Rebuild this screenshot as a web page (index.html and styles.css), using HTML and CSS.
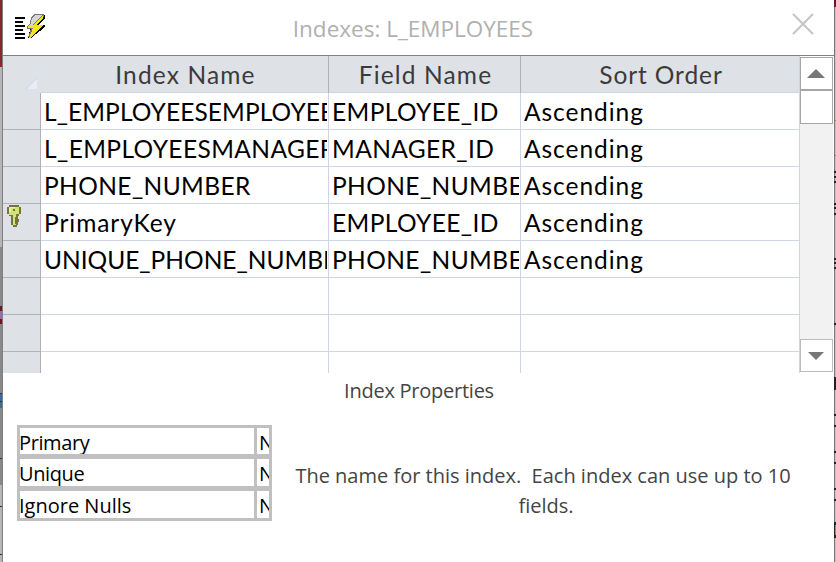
FILE: index.html
```html
<!DOCTYPE html>
<html lang="en">
<head>
<meta charset="utf-8">
<title>Indexes: L_EMPLOYEES</title>
<link rel="stylesheet" href="styles.css">
</head>
<body>
<div class="screen">
<svg class="edge" width="3" height="562" viewBox="0 0 3 562" shape-rendering="crispEdges">
<path fill="#b5b5b5" d="M0 0h2v562h-2z"/><path fill="#8b2631" d="M0 0h2v67h-2z"/><path fill="#888" d="M0 247h2v238h-2z"/>
<path fill="#6e1720" d="M0 306h2v18h-2z"/><path fill="#9270a8" d="M0 311h2v8h-2z"/><path fill="#3d6a9d" d="M0 394h2v14h-2z"/>
<path fill="#333" d="M0 393h2v1h-2zM0 401h2v1h-2zM0 458h2v1h-2zM0 506h2v1h-2zM0 554h2v1h-2z"/><path fill="#808080" d="M2 0h1v562h-1z"/>
</svg>
<main class="window">
<header class="titlebar">
<svg class="app-icon" width="31" height="27" viewBox="0 0 31 27" shape-rendering="crispEdges">
<path fill="#000" d="M0 4h10v2H0zM0 8h8v2H0zM0 12h10v2H0zM0 16h8v2H0zM0 20h10v2H0zM0 24h10v2H0z"/>
<path fill="#000" d="M26 2h4v3l-6 7h6v2L16 25h-3l2-8z"/>
<path fill="#777" d="M19 1h10v2l-7 9h5L14 24h-1l3-8h-4v-3l3-3 1-6z"/>
<path fill="#d6d6d6" d="M20 2h7l-5 5-5 5h-3l2-2 1-5z"/>
<path fill="#f1e51d" d="M27 3h1v2l-6 7h6L15 25h-1l4-10h-5l1-3h4z"/>
</svg>
<h1>Indexes: L_EMPLOYEES</h1>
<svg class="close" width="22" height="22" viewBox="0 0 22 22"><path d="M1 1l20 20M21 1L1 21" stroke="#c4c4c4" stroke-width="2" fill="none"/></svg>
</header>
<section class="datasheet">
<div class="grid">
<div class="row head"><div class="selector"><svg width="11" height="11" viewBox="0 0 11 11"><path d="M11 0v11H0z" fill="#e8edf4"/><path d="M11 0L0 11" stroke="#c5d4e9" fill="none"/></svg></div><div class="cell">Index Name</div><div class="cell">Field Name</div><div class="cell">Sort Order</div></div>
<div class="row"><div class="selector"></div><div class="cell snug"><span>L_EMPLOYEESEMPLOYEE_ID</span></div><div class="cell"><span>EMPLOYEE_ID</span></div><div class="cell mixed"><span>Ascending</span></div></div>
<div class="row"><div class="selector"></div><div class="cell"><span>L_EMPLOYEESMANAGER_ID</span></div><div class="cell"><span>MANAGER_ID</span></div><div class="cell mixed"><span>Ascending</span></div></div>
<div class="row"><div class="selector"></div><div class="cell"><span>PHONE_NUMBER</span></div><div class="cell"><span>PHONE_NUMBER</span></div><div class="cell mixed"><span>Ascending</span></div></div>
<div class="row"><div class="selector"><svg class="key" width="14" height="22" viewBox="0 0 14 22" shape-rendering="crispEdges"><path fill="#77733a" d="M2 0h10v2h2v7h-2v2h-1v3h1v3h-1v3h-1v2H6v-2H4v-9H2V9H0V2h2z"/><path fill="#d0e47a" d="M2 2h10v7H9v11H6V10H2z"/><path fill="#e6f4a5" d="M3 2h5v1H3zM2 3h2v4H2z"/><path fill="#77733a" d="M6 4h2v2H6zM8 12h1v7H8z"/></svg></div><div class="cell mixed"><span>PrimaryKey</span></div><div class="cell"><span>EMPLOYEE_ID</span></div><div class="cell mixed"><span>Ascending</span></div></div>
<div class="row"><div class="selector"></div><div class="cell tight"><span>UNIQUE_PHONE_NUMBER</span></div><div class="cell"><span>PHONE_NUMBER</span></div><div class="cell mixed"><span>Ascending</span></div></div>
<div class="row"><div class="selector"></div><div class="cell"></div><div class="cell"></div><div class="cell"></div></div>
<div class="row"><div class="selector"></div><div class="cell"></div><div class="cell"></div><div class="cell"></div></div>
<div class="row"><div class="selector"></div><div class="cell"></div><div class="cell"></div><div class="cell"></div></div>
</div>
<div class="scrollbar">
<div class="arrow"><svg width="18" height="9" viewBox="0 0 18 9"><path d="M0 9L9 0l9 9z" fill="#777"/></svg></div>
<div class="thumb"></div><div class="track"></div>
<div class="arrow down"><svg width="16" height="8" viewBox="0 0 16 8"><path d="M0 0h16L8 8z" fill="#777"/></svg></div>
</div>
</section>
<section class="properties">
<h2>Index Properties</h2>
<div class="prop-body">
<div class="props"><div class="name">Primary</div><div class="value">No</div><div class="name">Unique</div><div class="value">No</div><div class="name wide">Ignore Nulls</div><div class="value">No</div></div>
<p class="help"><span>The name for this index.&nbsp; Each index can use up to 10</span><br><span class="last">fields.</span></p>
</div>
</section>
</main>
<svg class="edge" width="2" height="562" viewBox="0 0 2 562" shape-rendering="crispEdges">
<path fill="#c4c4c4" d="M0 0h2v562h-2z"/><path fill="#6d1724" d="M0 0h2v7h-2z"/><path fill="#777" d="M0 7h1v555h-1z"/>
<path fill="#c07a3d" d="M1 120h1v1h-1zM1 155h1v1h-1z"/>
<path fill="#222" d="M0 171h2v2h-2zM0 176h2v2h-2zM0 181h2v2h-2zM0 203h2v2h-2zM0 207h2v2h-2zM0 213h2v2h-2zM0 258h2v2h-2zM0 262h2v2h-2zM0 267h2v2h-2zM0 323h2v2h-2zM0 377h2v13h-2zM0 414h2v2h-2zM0 425h2v2h-2zM0 451h2v2h-2zM0 462h2v2h-2zM0 488h2v2h-2zM0 499h2v2h-2zM0 522h2v16h-2z"/>
<path fill="#5b9bd0" d="M1 525h1v10h-1z"/>
</svg>
</div>
</body>
</html>
```

FILE: styles.css
```css
* { box-sizing: border-box; }
body { margin: 0; background: #fff; overflow: hidden; }
.screen { display: flex; width: 836px; height: 562px; }
.edge { flex: none; display: block; }
.window { width: 831px; height: 562px; background: #fff; }
.titlebar { height: 56px; display: grid; grid-template-columns: 50px 1fr 50px; border-bottom: 1px solid #808285; }
.app-icon { margin: 13px 0 0 12px; }
h1 { margin: 0; padding: 12px 11px 0 0; text-align: center; font: 400 22.5px/34px "Open Sans", sans-serif; color: #b0b0b0; }
.close { margin: 13px 0 0 8px; }
.datasheet { display: flex; height: 317px; }
.grid { width: 797px; height: 317px; overflow: hidden; font: 24.5px/36px Lato, sans-serif; color: #000; }
.row { display: grid; grid-template-columns: 38px 288px 192px 279px; height: 37px; }
.selector { background: #dee1e6; border-right: 1px solid #aeb1b5; border-bottom: 1px solid #aeb1b5; overflow: hidden; }
.selector svg { display: block; margin: 22px 0 0 23px; }
.selector .key { margin: 1px 0 0 4px; }
.cell { overflow: hidden; white-space: nowrap; padding: 1px 1px 0 3px; border-right: 1px solid #cdd5e4; border-bottom: 1px solid #cdd5e4; letter-spacing: .4px; }
.cell span { display: block; overflow: hidden; }
.mixed { letter-spacing: .95px; }
.snug { letter-spacing: .1px; }
.tight { letter-spacing: 0; }
.head .cell { background: #dee1e6; color: #3b3b3b; text-align: center; padding: 1px 0 0 2px; letter-spacing: 1.15px; border-right-color: #aeb1b5; }
.head .cell:last-child { letter-spacing: .9px; border-right-color: #cdd5e4; }
.head .selector { border-color: #dee1e6; }
.scrollbar { width: 34px; height: 317px; display: flex; flex-direction: column; padding: 1px 1px 1px 0; }
.arrow, .thumb { height: 33px; background: #fff; border: 1px solid #a6a6a6; display: grid; place-items: center; }
.arrow svg { margin-right: 1px; }
.thumb { height: 34px; }
.track { flex: 1; background: #f2f2f2; }
.down { border-color: #bcbcbc; }
.properties { height: 189px; }
h2 { margin: 0; height: 52px; padding: 3px 0 0 1px; text-align: center; font: 400 20px/30px "Open Sans", sans-serif; letter-spacing: -0.25px; color: #444; }
.prop-body { display: flex; }
.props { width: 255px; height: 96px; margin-left: 14px; padding: 3px; background: #c0c0c0; display: grid; grid-template-columns: 234px 12px; grid-template-rows: 26px 27px 27px; column-gap: 3px; row-gap: 5px; font: 20px/30px "Open Sans", sans-serif; letter-spacing: -0.4px; }
.props div { background: #fff; overflow: hidden; white-space: nowrap; }
.props .name { text-indent: -1px; }
.props .wide { letter-spacing: 0; }
.props .value { padding-left: 2px; }
.help { width: 530px; margin: 36px 0 0 6px; text-align: center; font: 20px/30px "Open Sans", sans-serif; color: #444; white-space: nowrap; }
.last { padding-left: 6px; }
```
